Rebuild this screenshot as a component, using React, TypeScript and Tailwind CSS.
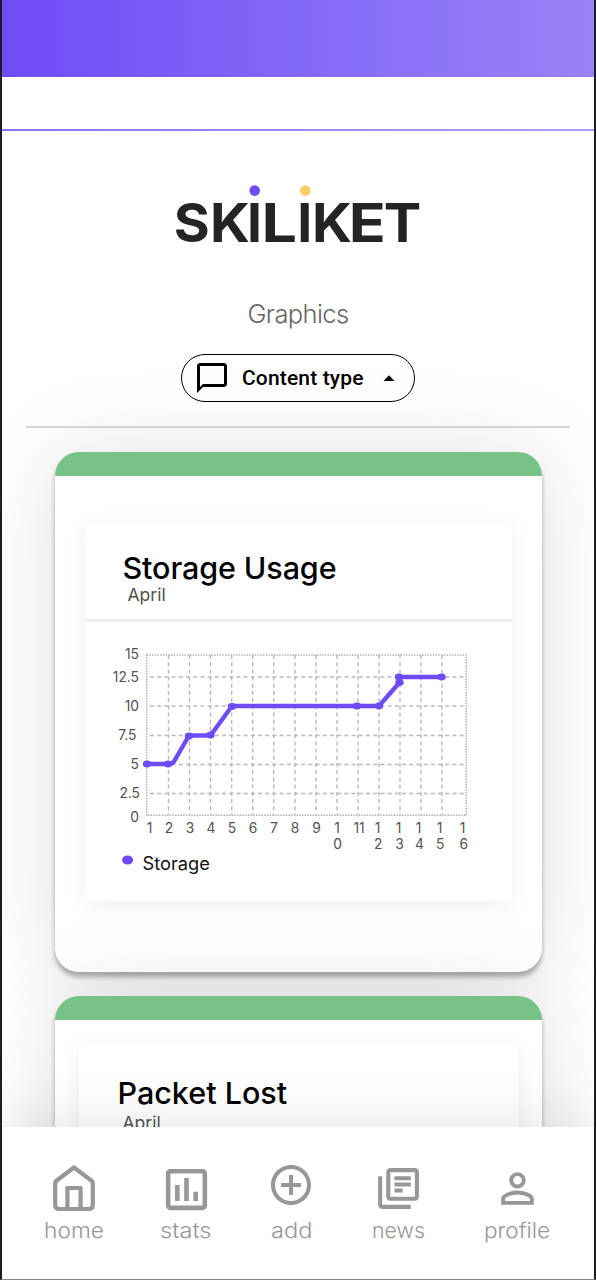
import React from "react";

const LOGO: { ch: string; x: number; w: number }[] = [
  { ch: "S", x: -0.2, w: 36 },
  { ch: "K", x: 36, w: 40 },
  { ch: "I", x: 73.1, w: 15 },
  { ch: "L", x: 87.5, w: 35.5 },
  { ch: "I", x: 123.2, w: 15 },
  { ch: "K", x: 138, w: 40 },
  { ch: "E", x: 174.7, w: 37 },
  { ch: "T", x: 209.7, w: 37.5 },
];

function Logo() {
  return (
    <svg className="block overflow-visible" width="248" height="76" viewBox="0 0 248 76" role="img" aria-label="SKILIKET">
      <g fontFamily="Inter, sans-serif" fontWeight="700" fontSize="53.5" fill="#242424">
        {LOGO.map((l, i) => (
          <text key={i} x={l.x} y="60" textLength={l.w} lengthAdjust="spacingAndGlyphs">
            {l.ch}
          </text>
        ))}
      </g>
      <circle cx="80.7" cy="8.6" r="5.3" fill="#6F4BF6" />
      <circle cx="131.2" cy="8.6" r="5.3" fill="#F6CE68" />
    </svg>
  );
}

const V_LINES = [168.5, 189.5, 210.5, 231.7, 252.7, 273.7, 295, 316, 337, 358, 379, 400, 421, 442];
const H_LINES = [677, 706, 735.5, 764.5, 793.5];
const Y_LABELS: [string, number, number][] = [
  ["15", 139, 659],
  ["12.5", 139, 681.5],
  ["10", 139, 710.5],
  ["7.5", 136.5, 740],
  ["5", 139, 769],
  ["2.5", 140, 798],
  ["0", 139, 822],
];
const X_LABELS: [string, number][] = [
  ["1", 149.5], ["2", 169], ["3", 190], ["4", 211], ["5", 232], ["6", 253], ["7", 274],
  ["8", 295], ["9", 316.5], ["1", 337], ["11", 359], ["1", 377.5], ["1", 398.5],
  ["1", 418.5], ["1", 439.5], ["1", 462.5],
];
const X_LABELS_LOWER: [string, number][] = [
  ["0", 337.5], ["2", 378.3], ["3", 399.5], ["4", 419.5], ["5", 440.3], ["6", 463.7],
];
const POINTS: [number, number][] = [
  [147, 764], [168, 764], [189, 736], [210.5, 735], [232, 706.5], [357, 706],
  [379, 706], [399.5, 682.5], [399, 677], [441.5, 677],
];

function StorageChart() {
  return (
    <svg className="block" width="426" height="279" viewBox="85 622 426 279">
      <g stroke="#b9b9b9" strokeWidth="1.4" strokeDasharray="4 3.2" fill="none">
        {V_LINES.map((x) => (
          <path key={x} d={`M${x} 655V815`} />
        ))}
        {H_LINES.map((y) => (
          <path key={y} d={`M150 ${y}H466`} />
        ))}
      </g>
      <rect x="146.7" y="655" width="319.5" height="160.3" fill="none" stroke="#b0b0b0" strokeWidth="1.5" strokeDasharray="1.5 1.2" />
      <path
        d="M147 764H168Q172 764.5 174 761.5L189 735.5H210.5L232 706H379L399.5 682.5V677H441.5"
        fill="none"
        stroke="#6F4BF6"
        strokeWidth="4.4"
        strokeLinejoin="round"
      />
      {POINTS.map(([x, y], i) => (
        <ellipse key={i} cx={x} cy={y} rx="4.2" ry="3.4" fill="#6F4BF6" />
      ))}
      <g fontFamily="Inter, sans-serif" fontSize="13.8" fill="#505050">
        {Y_LABELS.map(([t, x, y]) => (
          <text key={t} x={x} y={y} textAnchor="end">{t}</text>
        ))}
        {X_LABELS.map(([t, x], i) => (
          <text key={i} x={x} y="832.5" textAnchor="middle">{t}</text>
        ))}
        {X_LABELS_LOWER.map(([t, x]) => (
          <text key={t} x={x} y="849" textAnchor="middle">{t}</text>
        ))}
      </g>
      <ellipse cx="127.6" cy="860" rx="5.5" ry="4.6" fill="#6F4BF6" />
      <text x="142.5" y="869.8" fontFamily="Inter, sans-serif" fontSize="18" fill="#111" textLength="67.5" lengthAdjust="spacingAndGlyphs">Storage</text>
    </svg>
  );
}

function HomeIcon() {
  return (
    <svg className="shrink-0" width="44" height="48" viewBox="0 0 44 48" fill="none" stroke="currentColor" strokeWidth="4.2">
      <path d="M3.2 19.2Q3.2 17.7 4.4 16.8L22 3.5L39.6 16.8Q40.8 17.7 40.8 19.2V41Q40.8 45 36.8 45H7.2Q3.2 45 3.2 41Z" strokeLinejoin="round" />
      <path d="M15.4 45V24H28.6V45" strokeLinejoin="round" />
    </svg>
  );
}

const ICONS = {
  stats: "M19 3H5C3.9 3 3 3.9 3 5v14c0 1.1.9 2 2 2h14c1.1 0 2-.9 2-2V5c0-1.1-.9-2-2-2zm0 16H5V5h14zM7 10h2v7H7zm4-3h2v10h-2zm4 6h2v4h-2z",
  add: "M13 7h-2v4H7v2h4v4h2v-4h4v-2h-4zm-1-5C6.48 2 2 6.48 2 12s4.48 10 10 10 10-4.48 10-10S17.52 2 12 2zm0 18c-4.41 0-8-3.59-8-8s3.59-8 8-8 8 3.59 8 8-3.59 8-8 8z",
  news: "M4 6H2v14c0 1.1.9 2 2 2h14v-2H4zm16-4H8c-1.1 0-2 .9-2 2v12c0 1.1.9 2 2 2h12c1.1 0 2-.9 2-2V4c0-1.1-.9-2-2-2zm0 14H8V4h12zM10 9h8v2h-8zm0 3h4v2h-4zm0-6h8v2h-8z",
  profile: "M12 5.9a2.1 2.1 0 1 1 0 4.2 2.1 2.1 0 0 1 0-4.2m0 9c2.97 0 6.1 1.46 6.1 2.1v1.1H5.9V17c0-.64 3.13-2.1 6.1-2.1M12 4C9.79 4 8 5.79 8 8s1.79 4 4 4 4-1.79 4-4-1.79-4-4-4zm0 9c-2.67 0-8 1.34-8 4v3h16v-3c0-2.66-5.33-4-8-4z",
};

function Glyph({ d, size, className = "" }: { d: string; size: number; className?: string }) {
  return (
    <svg className={`shrink-0 ${className}`} width={size} height={size} viewBox="0 0 24 24" fill="currentColor">
      <path d={d} />
    </svg>
  );
}

function NavItem({ label, width, className = "", children }: { label: string; width: number; className?: string; children: React.ReactNode }) {
  return (
    <a className={`flex shrink-0 flex-col items-center text-[#979797] ${className}`}>
      <span className="flex h-[54px] w-0 items-center justify-center">{children}</span>
      <svg className="mt-[1px] block overflow-visible" width={width} height="30">
        <text x="0" y="22" textLength={width} lengthAdjust="spacingAndGlyphs" fontFamily="Inter, sans-serif" fontWeight="350" fontSize="21.5" fill="currentColor">
          {label}
        </text>
      </svg>
    </a>
  );
}

function Card({ className, children }: { className: string; children: React.ReactNode }) {
  return (
    <article className={`relative w-[487px] shrink-0 overflow-visible rounded-[24px] bg-white shadow-[0_5px_5px_rgba(0,0,0,0.3),0_4px_90px_rgba(0,0,0,0.13)] ${className}`}>
      <div className="h-6 rounded-t-[24px] bg-[#76C287]" />
      {children}
    </article>
  );
}

export default function App() {
  return (
    <div className="flex h-[1280px] w-[596px] flex-col overflow-hidden border-r-2 border-b border-l-2 border-[#1e1e20] border-b-[#858585] bg-white font-['Inter',sans-serif]">
      <div className="h-[77px] shrink-0 bg-linear-to-r from-[#6F4BF6] to-[#9A82F8]" />
      <div className="mt-[52px] h-[2px] shrink-0 bg-linear-to-r from-[#8D70F6] to-[#B09DFA]" />

      <main className="flex h-[996px] shrink-0 flex-col items-center overflow-hidden">
        <div className="mt-[51px] h-[76px] w-[248px] shrink-0">
          <Logo />
        </div>
        <h1 className="mt-[40px] h-8 shrink-0 text-[25.5px] leading-8 font-[340] tracking-[-0.6px] text-[#666666]">Graphics</h1>
        <button className="relative z-10 mt-[24px] flex h-[48px] w-[234px] shrink-0 items-center rounded-full border-[1.5px] border-black bg-transparent pl-[12px] font-['Roboto',sans-serif] text-[21px] font-medium text-black">
          <Glyph
            size={36}
            d="M20 2H4c-1.1 0-2 .9-2 2v18l4-4h14c1.1 0 2-.9 2-2V4c0-1.1-.9-2-2-2zm0 14H6l-2 2V4h16z"
          />
          <span className="ml-[12px] w-[124px] pt-[2px] text-left tracking-[0.15px] whitespace-nowrap">Content type</span>
          <svg className="ml-[17px]" width="12" height="6" viewBox="0 0 12 6">
            <path d="M0.5 6L6 0.3L11.5 6Z" fill="#000" />
          </svg>
        </button>
        <div className="relative z-10 mt-[24px] h-[2px] w-[544px] shrink-0 bg-[#d4d4d4]" />

        <Card className="mt-[24px] h-[520px]">
          <section className="mt-[47px] ml-[30px] h-[378px] w-[427px] bg-white shadow-[0_4px_20px_rgba(0,0,0,0.07)]">
            <header className="h-[99px] border-b-[3px] border-[#eeeeee] pt-[27px] pl-[38px]">
              <h2 className="h-9 text-[30.5px] leading-9 font-[450] tracking-[-0.1px] text-black">Storage Usage</h2>
              <p className="pl-[5px] text-[17.5px] leading-[18px] text-[#505050]">April</p>
            </header>
            <StorageChart />
          </section>
        </Card>

        <Card className="mt-6 h-[520px]">
          <section className="mt-[24px] ml-[24px] h-[378px] w-[439px] bg-white shadow-[0_4px_20px_rgba(0,0,0,0.07)]">
            <header className="h-[99px] pt-[31px] pl-[39px]">
              <h2 className="h-9 text-[30.5px] leading-9 font-[450] text-black">Packet Lost</h2>
              <p className="pl-[5px] text-[17.5px] leading-[24px] text-[#505050]">April</p>
            </header>
          </section>
        </Card>
      </main>

      <nav className="relative z-20 flex h-[152px] shrink-0 bg-white pt-[34px] pl-[42px] shadow-[0_-4px_60px_rgba(0,0,0,0.1)]">
        <NavItem label="home" width={60}>
          <HomeIcon />
        </NavItem>
        <NavItem label="stats" width={51.5} className="ml-[56px]">
          <Glyph d={ICONS.stats} size={55} className="mt-[3px] ml-px" />
        </NavItem>
        <NavItem label="add" width={41.5} className="ml-[59px]">
          <Glyph d={ICONS.add} size={48} className="-mt-[6px]" />
        </NavItem>
        <NavItem label="news" width={53} className="ml-[60px]">
          <Glyph d={ICONS.news} size={49} />
        </NavItem>
        <NavItem label="profile" width={66} className="ml-[59px]">
          <Glyph d={ICONS.profile} size={49} />
        </NavItem>
      </nav>
    </div>
  );
}
